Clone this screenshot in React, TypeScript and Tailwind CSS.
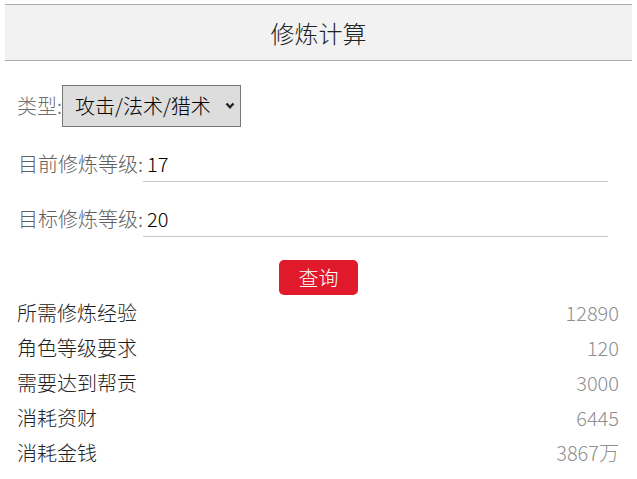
import React, { useState } from 'react';

const font = { fontFamily: '"Microsoft YaHei", "Noto Sans CJK SC", "Noto Sans", sans-serif' };

const results = [
    { label: '所需修炼经验', value: '12890' },
    { label: '角色等级要求', value: '120' },
    { label: '需要达到帮贡', value: '3000' },
    { label: '消耗资财', value: '6445' },
    { label: '消耗金钱', value: '3867万' },
];

export default function App() {
    const [type, setType] = useState('攻击/法术/猎术');
    const [current, setCurrent] = useState('17');
    const [target, setTarget] = useState('20');

    return (
        <div className="w-[637px] h-[479px] bg-white overflow-hidden font-light" style={font}>
            {/* Header */}
            <div className="mt-[4px] mx-[5px] h-[57px] border-y border-[#acacac] bg-[#f2f2f2] flex items-center justify-center text-[24px] text-[#222]">
                修炼计算
            </div>

            {/* Type */}
            <div className="mt-[24px] pl-[17px] flex items-center">
                <span className="text-[20px] text-[#707070] leading-none">类型:</span>
                <div className="relative w-[179px] h-[42px]">
                    <select
                        value={type}
                        onChange={(e) => setType(e.target.value)}
                        className="appearance-none w-full h-full border border-[#767676] bg-[#dddddd] pl-[12px] pr-[30px] text-[20px] font-light text-[#000] outline-none"
                        style={font}
                    >
                        <option>攻击/法术/猎术</option>
                        <option>防御/抗法</option>
                    </select>
                    <svg className="absolute right-[6px] top-[17px] pointer-events-none" width="10" height="8" viewBox="0 0 10 8">
                        <path d="M1.5 1.5 L5 5.2 L8.5 1.5" fill="none" stroke="#222" strokeWidth="2.4" />
                    </svg>
                </div>
            </div>

            {/* Levels */}
            <div className="mt-[19px] pl-[18px] pr-[29px] h-[36px] flex items-center">
                <span className="text-[20px] text-[#606060] whitespace-nowrap">目前修炼等级:</span>
                <input
                    value={current}
                    onChange={(e) => setCurrent(e.target.value)}
                    className="flex-1 h-full border-b border-[#c8c8c8] pl-[4px] text-[20px] font-light text-[#000] outline-none"
                    style={font}
                />
            </div>
            <div className="mt-[19px] pl-[18px] pr-[29px] h-[36px] flex items-center">
                <span className="text-[20px] text-[#606060] whitespace-nowrap">目标修炼等级:</span>
                <input
                    value={target}
                    onChange={(e) => setTarget(e.target.value)}
                    className="flex-1 h-full border-b border-[#c8c8c8] pl-[4px] text-[20px] font-light text-[#000] outline-none"
                    style={font}
                />
            </div>

            {/* Query */}
            <div className="mt-[23px] flex justify-center">
                <button className="w-[79px] h-[35px] rounded-[5px] bg-[#e0192b] text-white text-[20px] font-light" style={font}>
                    查询
                </button>
            </div>

            {/* Results */}
            <div className="pl-[17px] pr-[18px]">
                {results.map((r) => (
                    <div key={r.label} className="h-[35px] flex items-center justify-between text-[20px]">
                        <span className="text-[#222]">{r.label}</span>
                        <span className="text-[#8f8f8f]">{r.value}</span>
                    </div>
                ))}
            </div>
        </div>
    );
}
